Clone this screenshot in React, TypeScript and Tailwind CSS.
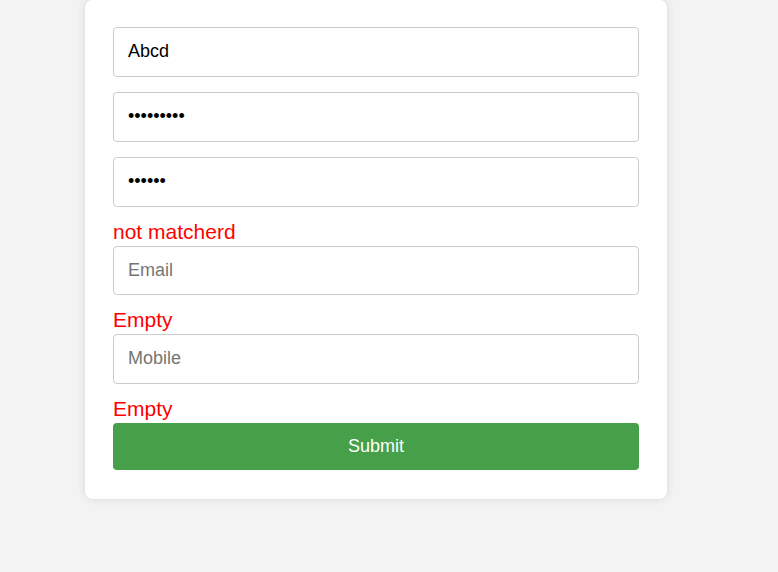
import { useState } from "react";

const fieldClass =
  "block w-full h-[49.5px] rounded-[4px] border border-[#cccccc] bg-white px-[14px] text-[18px] text-black placeholder:text-[#757575] outline-none";

const ErrorText = ({ text }: { text: string }) => (
  <div className="mt-[13px] mb-[3px] text-[21px] leading-[23px] text-[#ff0000]">
    {text}
  </div>
);

const App = () => {
  const [name, setName] = useState("Abcd");
  const [password, setPassword] = useState("123456789");
  const [confirm, setConfirm] = useState("123456");
  const [email, setEmail] = useState("");
  const [mobile, setMobile] = useState("");

  return (
    <div className="min-h-[572px] w-full bg-[#f3f3f3] font-['Liberation_Sans',Arial,sans-serif]">
      <div className="ml-[85px] w-[582px] rounded-lg bg-white px-[28px] pt-[27px] pb-[29.5px] shadow-[0_0_8px_rgba(0,0,0,0.12)]">
        <form onSubmit={(e) => e.preventDefault()} className="flex flex-col">
          <input
            className={fieldClass}
            value={name}
            onChange={(e) => setName(e.target.value)}
            placeholder="Name"
          />
          <input
            type="password"
            className={`${fieldClass} mt-[15.5px]`}
            value={password}
            onChange={(e) => setPassword(e.target.value)}
            placeholder="Password"
          />
          <input
            type="password"
            className={`${fieldClass} mt-[15.5px]`}
            value={confirm}
            onChange={(e) => setConfirm(e.target.value)}
            placeholder="Confirm Password"
          />
          <ErrorText text="not matcherd" />
          <input
            className={fieldClass}
            value={email}
            onChange={(e) => setEmail(e.target.value)}
            placeholder="Email"
          />
          <ErrorText text="Empty" />
          <input
            className={fieldClass}
            value={mobile}
            onChange={(e) => setMobile(e.target.value)}
            placeholder="Mobile"
          />
          <ErrorText text="Empty" />
          <button
            type="submit"
            className="h-[47px] w-full rounded-[4px] bg-[#45a049] text-[18px] text-white"
          >
            Submit
          </button>
        </form>
      </div>
    </div>
  );
};

export default App;
